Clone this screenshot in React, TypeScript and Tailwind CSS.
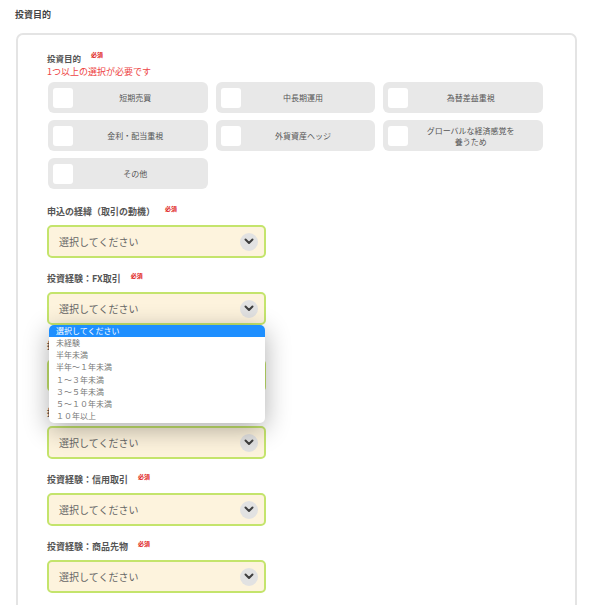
const FONT = "font-['Noto_Sans_CJK_JP','Noto_Sans',sans-serif]";

const PURPOSES = [
  { label: "短期売買" },
  { label: "中長期運用" },
  { label: "為替差益重視" },
  { label: "金利・配当重視" },
  { label: "外貨資産ヘッジ" },
  { label: "グローバルな経済感覚を\n養うため" },
  { label: "その他" },
];

const EXPERIENCE = [
  "選択してください",
  "未経験",
  "半年未満",
  "半年～１年未満",
  "１～３年未満",
  "３～５年未満",
  "５～１０年未満",
  "１０年以上",
];

const FIELDS = [
  "申込の経緯（取引の動機）",
  "投資経験：FX取引",
  "投資経験：株式取引",
  "投資経験：投資信託",
  "投資経験：信用取引",
  "投資経験：商品先物",
];

function Required() {
  return (
    <span className="ml-[10px] -translate-y-[3px] text-[6px] font-bold leading-none text-[#e02020]">
      必須
    </span>
  );
}

function Chevron() {
  return (
    <span className="flex h-[18px] w-[18px] items-center justify-center rounded-full bg-[#e2e2e2]">
      <svg width="10" height="7" viewBox="0 0 10 7" fill="none">
        <path
          d="M1.5 1.5 L5 5 L8.5 1.5"
          stroke="#3f3f3f"
          strokeWidth="2"
          strokeLinecap="round"
          strokeLinejoin="round"
        />
      </svg>
    </span>
  );
}

function SelectBox({ open }: { open?: boolean }) {
  return (
    <div className="relative w-[219px]">
      <div className="flex h-[33px] items-center justify-between rounded-[5px] border-2 border-[#c4e46c] bg-[#fdf3dd] pl-[10px] pr-[6px]">
        <span className="text-[10px] text-[#666]">選択してください</span>
        <Chevron />
      </div>
      {open && (
        <ul className="absolute left-[2px] top-[33px] z-10 w-[216px] overflow-hidden rounded-[5px] bg-white pb-[1px] shadow-[0_6px_26px_rgba(0,0,0,0.32)]">
          {EXPERIENCE.map((item, i) => (
            <li
              key={item}
              className={
                i === 0
                  ? "flex h-[12px] items-center bg-[#1e8fff] px-[7px] text-[8px] text-white"
                  : "flex h-[12.2px] items-center px-[7px] text-[8px] text-[#777]"
              }
            >
              {item}
            </li>
          ))}
        </ul>
      )}
    </div>
  );
}

export default function App() {
  return (
    <div className={`${FONT} min-h-[605px] w-[600px] bg-white pt-[9px]`}>
      <h1 className="ml-[15px] h-[12px] text-[9px] font-bold leading-[12px] text-[#444]">
        投資目的
      </h1>

      <div className="ml-[16px] mt-[12px] w-[561px] rounded-[7px] border-2 border-[#e4e4e4] px-[29px] pb-[40px] pt-[17px]">
        <div className="flex h-[12px] items-center text-[8.5px] font-bold text-[#555]">
          投資目的
          <Required />
        </div>
        <p className="mt-[2px] h-[12px] text-[9px] leading-[12px] text-[#e44]">
          1つ以上の選択が必要です
        </p>

        <div className="mt-[4px] grid w-[496px] grid-cols-3 gap-x-[8px] gap-y-[7px] pl-[1px]">
          {PURPOSES.map((p) => (
            <label
              key={p.label}
              className="flex h-[31px] items-center rounded-[6px] bg-[#e8e8e8] pl-[5px] pr-[10px]"
            >
              <span className="h-[20px] w-[20px] shrink-0 rounded-[3px] bg-white" />
              <span className="flex-1 whitespace-pre-line text-center text-[8px] leading-[11px] text-[#555]">
                {p.label}
              </span>
            </label>
          ))}
        </div>

        <div className="mt-[16px] flex flex-col gap-[14px]">
          {FIELDS.map((f, i) => (
            <div key={f} className="flex flex-col gap-[7px]">
              <div className="flex h-[13px] items-center text-[9px] font-bold text-[#555]">
                {f}
                <Required />
              </div>
              <SelectBox open={i === 1} />
            </div>
          ))}
        </div>
      </div>
    </div>
  );
}
